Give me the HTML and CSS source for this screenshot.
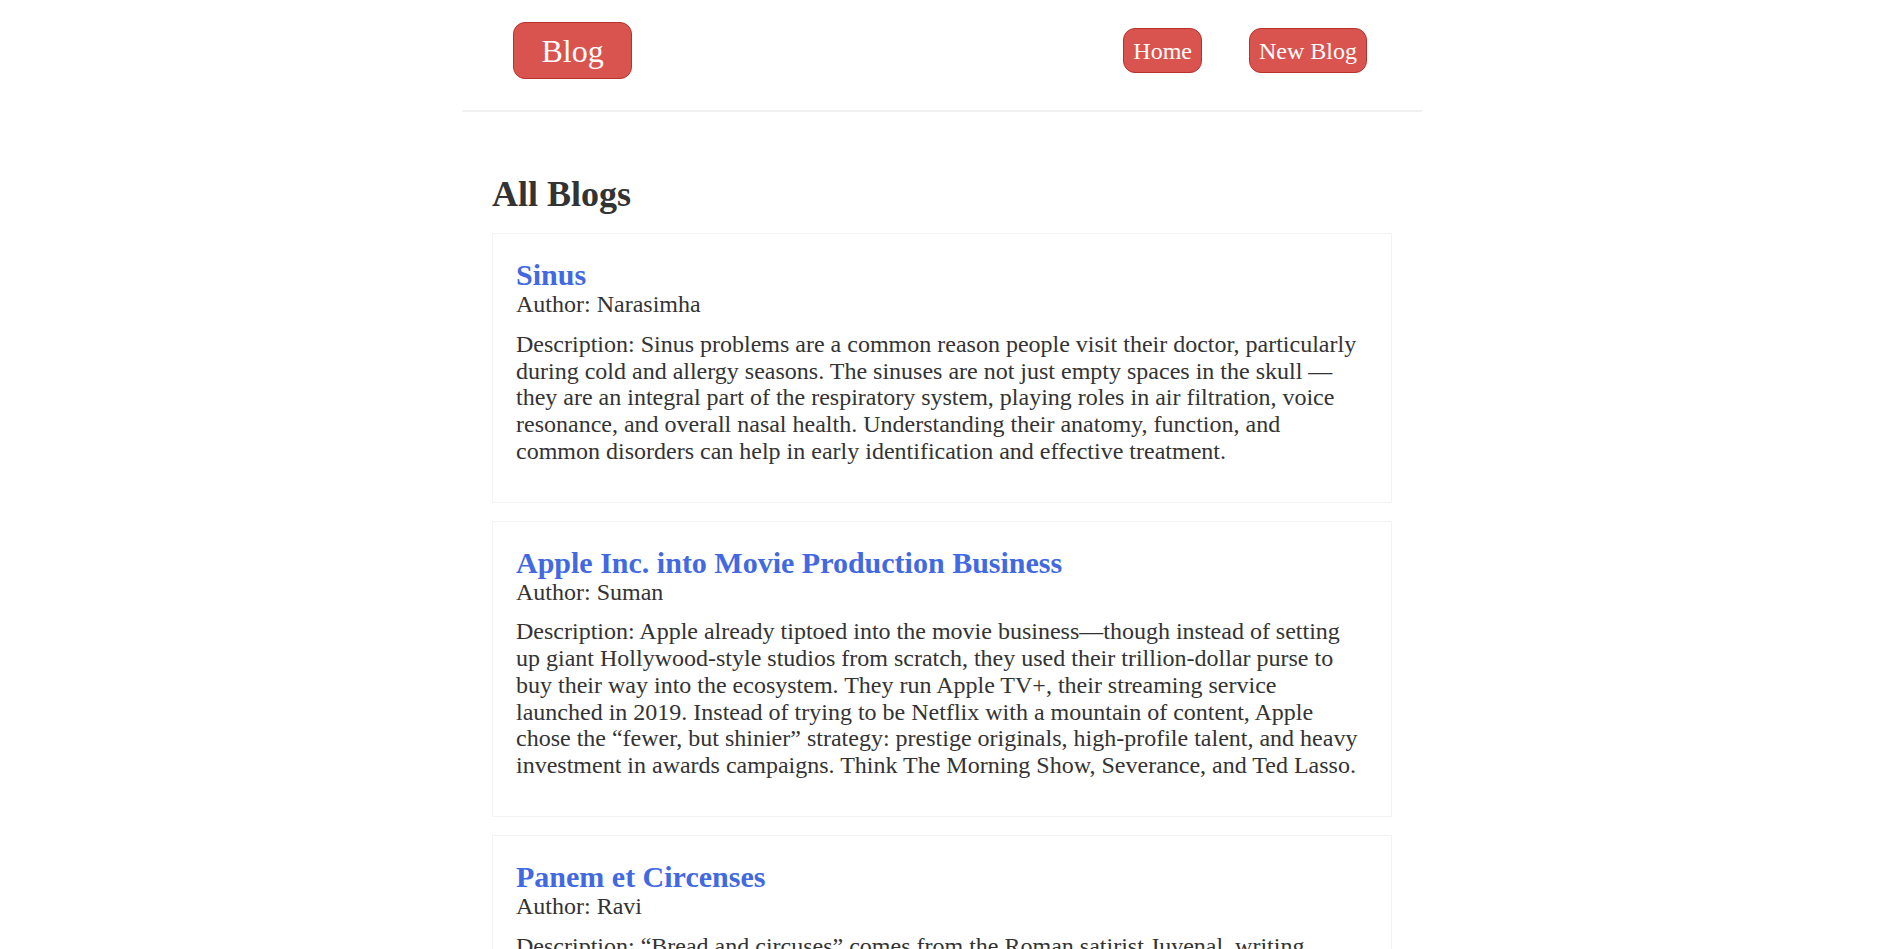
FILE: index.html
```html
<!DOCTYPE html>
<html lang="en">
<head>
<meta charset="utf-8">
<title>Blog</title>
<link rel="stylesheet" href="styles.css">
</head>
<body>
<div class="app">
  <nav class="navbar">
    <a class="btn btn-brand" href="#">Blog</a>
    <div class="links">
      <a class="btn" href="#">Home</a>
      <a class="btn" href="#">New Blog</a>
    </div>
  </nav>
  <main class="content">
    <h2 class="page-title">All Blogs</h2>
    <div class="blog-list">
      <article class="blog-preview">
        <h3 class="blog-title">Sinus</h3>
        <div class="blog-author">Author: Narasimha</div>
        <p class="blog-desc">Description: Sinus problems are a common reason people visit their doctor, particularly during cold and allergy seasons. The sinuses are not just empty spaces in the skull — they are an integral part of the respiratory system, playing roles in air filtration, voice resonance, and overall nasal health. Understanding their anatomy, function, and common disorders can help in early identification and effective treatment.</p>
      </article>
      <article class="blog-preview">
        <h3 class="blog-title">Apple Inc. into Movie Production Business</h3>
        <div class="blog-author">Author: Suman</div>
        <p class="blog-desc">Description: Apple already tiptoed into the movie business—though instead of setting up giant Hollywood-style studios from scratch, they used their trillion-dollar purse to buy their way into the ecosystem. They run Apple TV+, their streaming service launched in 2019. Instead of trying to be Netflix with a mountain of content, Apple chose the “fewer, but shinier” strategy: prestige originals, high-profile talent, and heavy investment in awards campaigns. Think The Morning Show, Severance, and Ted Lasso.</p>
      </article>
      <article class="blog-preview">
        <h3 class="blog-title">Panem et Circenses</h3>
        <div class="blog-author">Author: Ravi</div>
        <p class="blog-desc">Description: “Bread and circuses” comes from the Roman satirist Juvenal, writing around 100 AD. He complained that the people of Rome had given up their political responsibilities and now anxiously desired only two things: bread and circuses. Free grain and lavish public spectacles kept the masses content and distracted.</p>
      </article>
    </div>
  </main>
</div>
</body>
</html>
```

FILE: styles.css
```css
* {
  box-sizing: border-box;
}

body {
  margin: 0;
  font-family: "Liberation Serif", "Times New Roman", serif;
  color: #333;
  background: #fff;
}

.navbar {
  width: 960px;
  margin: 0 auto;
  padding: 22px 55px 31px 51px;
  display: flex;
  align-items: center;
  justify-content: space-between;
  border-bottom: 2px solid #f0f0f0;
}

.links {
  display: flex;
  align-items: center;
  gap: 47px;
}

.btn {
  display: inline-block;
  background: #d9534f;
  color: #fff;
  text-decoration: none;
  border: 1px solid #b8312d;
  border-radius: 12px;
  font-size: 24px;
  line-height: 27px;
  padding: 8.5px 9px 7.5px 9px;
}

.btn-brand {
  font-size: 32px;
  line-height: 36px;
  padding: 9.5px 27.5px;
}

.content {
  width: 960px;
  margin: 0 auto;
  padding: 62px 30px 30px 30px;
}

.page-title {
  margin: 0 0 19px 0;
  font-size: 36px;
  line-height: 40px;
  font-weight: bold;
  color: #333;
}

.blog-list {
  display: flex;
  flex-direction: column;
  gap: 18px;
}

.blog-preview {
  border: 1px solid #f2f2f2;
  padding: 24px 23px 24px 23px;
}

.blog-title {
  margin: 0;
  font-size: 30px;
  line-height: 33.2px;
  font-weight: bold;
  color: #4169e1;
}

.blog-author {
  font-size: 24px;
  line-height: 26.6px;
}

.blog-desc {
  margin: 13px 0 13px 0;
  font-size: 24px;
  line-height: 26.75px;
}
```
